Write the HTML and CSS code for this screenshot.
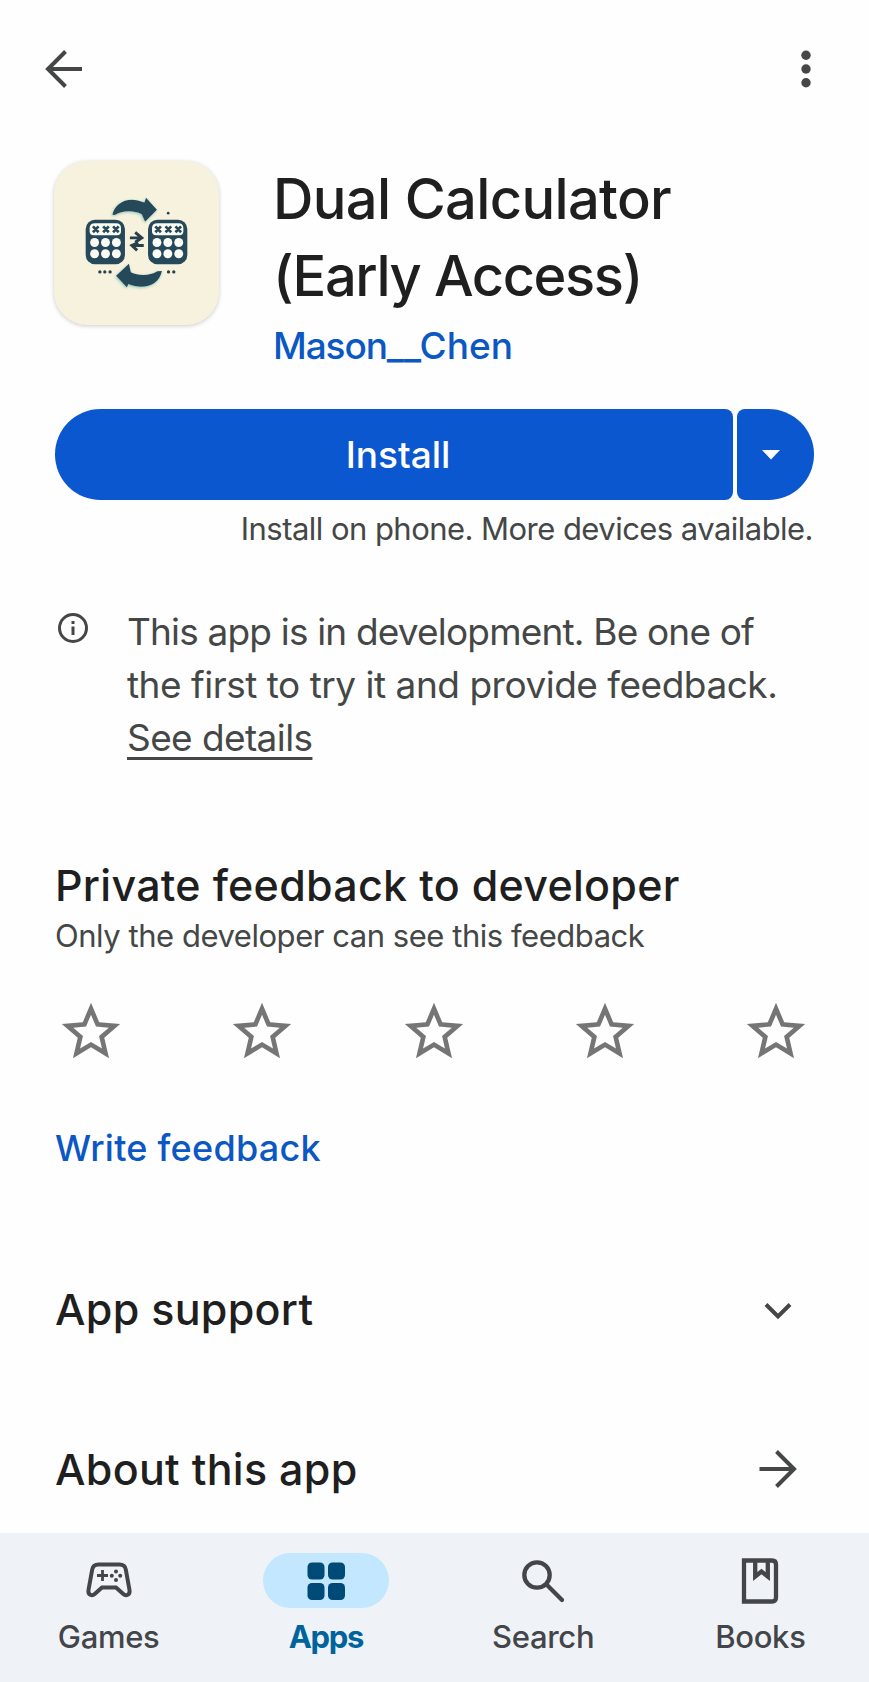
FILE: index.html
```html
<!DOCTYPE html>
<html lang="en">
<head>
<meta charset="utf-8">
<title>Dual Calculator</title>
<link rel="stylesheet" href="styles.css">
</head>
<body>
<div class="screen">
  <header class="topbar">
    <svg class="icon-arrow" viewBox="0 0 38 40"><path d="M37 20H3M20.500 2.500L3 20l17.500 17.500"/></svg>
    <svg class="icon-more" viewBox="0 0 10 38"><circle cx="5" cy="5.300" r="4.700"/><circle cx="5" cy="19" r="4.700"/><circle cx="5" cy="32.700" r="4.700"/></svg>
  </header>

  <main class="content">
    <section class="app">
      <svg class="app-icon" viewBox="38 32 500 493">
        <defs>
          <g id="calc">
            <rect width="119" height="135" rx="28" fill="#25485a"/>
            <path d="M28 11h64q15 0 15 15v9q0 12-12 12H24q-12 0-12-12v-9q0-15 16-15z" fill="#fbfbf0"/>
            <path d="M22 20l17 18m0-18L22 38M53 20l17 18m0-18L53 38M83 20l17 18m0-18L83 38" stroke="#25485a" stroke-width="8"/>
            <g fill="#fbfbf5"><circle cx="27" cy="69" r="13.500"/><circle cx="60" cy="69" r="13.500"/><circle cx="93" cy="69" r="13.500"/><circle cx="27" cy="103" r="13.500"/><circle cx="60" cy="103" r="13.500"/><circle cx="93" cy="103" r="13.500"/></g>
          </g>
          <filter id="glow" x="-20%" y="-20%" width="140%" height="140%"><feDropShadow dx="-2" dy="3" stdDeviation="5" flood-color="#8fc7bd"/></filter>
        </defs>
        <g filter="url(#glow)">
          <path d="M215 193C222 155 265 134 312 156L317 141L350 178L314 214L304 191C276 178 243 180 222 194Z" fill="#28495a"/>
          <path d="M365 363C357 405 312 422 263 403L259 413L226 378L265 341L271 367C296 379 328 378 351 364Z" fill="#28495a"/>
        </g>
        <use href="#calc" x="134" y="208"/>
        <use href="#calc" x="323" y="208"/>
        <path d="M268 263h34M284 246l20 17-20 13M310 286h-36M293 277l-19 9 16 15" fill="none" stroke="#28404a" stroke-width="9"/>
        <g fill="#28404a"><circle cx="384" cy="188" r="4"/><circle cx="177" cy="366" r="5"/><circle cx="192" cy="366" r="5"/><circle cx="208" cy="366" r="5"/><circle cx="385" cy="366" r="5"/><circle cx="401" cy="366" r="5"/></g>
      </svg>
      <div class="app-info">
        <h1 class="app-title"><span class="title-name">Dual Calculator</span><br><span class="title-note">(Early Access)</span></h1>
        <a class="app-author"><span class="author-first">Mason</span>__Chen</a>
      </div>
    </section>

    <div class="install">
      <button class="install-main">Install</button>
      <button class="install-more"><svg class="icon-caret" viewBox="0 0 18 10"><path d="M0 0h18L9 9.500z"/></svg></button>
    </div>
    <p class="install-note">Install on phone. More devices available.</p>

    <section class="notice">
      <svg class="icon-info" viewBox="0 0 32 32"><circle cx="16" cy="16" r="13.500"/><path d="M16 14.500v8.500M16 9v3"/></svg>
      <p class="notice-text"><span class="notice-lead">This app is in development. Be one of</span><br>the first to try it and provide feedback.<br><a class="notice-link">See details</a></p>
    </section>

    <section class="feedback">
      <h2 class="heading">Private feedback to developer</h2>
      <p class="feedback-sub">Only the developer can see this feedback</p>
      <div class="stars">
        <svg class="star" viewBox="0 0 24 24"><path d="M22 9.240l-7.190-.62L12 2 9.190 8.630 2 9.240l5.460 4.730L5.820 21 12 17.270 18.180 21l-1.630-7.030L22 9.240zM12 15.400l-3.760 2.270 1-4.280-3.320-2.880 4.380-.38L12 6.100l1.710 4.040 4.380.38-3.320 2.880 1 4.280L12 15.400z"/></svg>
        <svg class="star" viewBox="0 0 24 24"><path d="M22 9.240l-7.190-.62L12 2 9.190 8.630 2 9.240l5.460 4.730L5.820 21 12 17.270 18.180 21l-1.630-7.030L22 9.240zM12 15.400l-3.760 2.270 1-4.280-3.320-2.880 4.380-.38L12 6.100l1.710 4.040 4.380.38-3.320 2.880 1 4.280L12 15.400z"/></svg>
        <svg class="star" viewBox="0 0 24 24"><path d="M22 9.240l-7.190-.62L12 2 9.190 8.630 2 9.240l5.460 4.730L5.820 21 12 17.270 18.180 21l-1.630-7.030L22 9.240zM12 15.400l-3.760 2.270 1-4.280-3.320-2.880 4.380-.38L12 6.100l1.710 4.040 4.380.38-3.320 2.880 1 4.280L12 15.400z"/></svg>
        <svg class="star" viewBox="0 0 24 24"><path d="M22 9.240l-7.190-.62L12 2 9.190 8.630 2 9.240l5.460 4.730L5.820 21 12 17.270 18.180 21l-1.630-7.030L22 9.240zM12 15.400l-3.760 2.270 1-4.280-3.320-2.880 4.380-.38L12 6.100l1.710 4.040 4.380.38-3.320 2.880 1 4.280L12 15.400z"/></svg>
        <svg class="star" viewBox="0 0 24 24"><path d="M22 9.240l-7.190-.62L12 2 9.190 8.630 2 9.240l5.460 4.730L5.820 21 12 17.270 18.180 21l-1.630-7.030L22 9.240zM12 15.400l-3.760 2.270 1-4.280-3.320-2.880 4.380-.38L12 6.100l1.710 4.040 4.380.38-3.320 2.880 1 4.280L12 15.400z"/></svg>
      </div>
      <a class="write-link">Write feedback</a>
    </section>

    <section class="row row-support">
      <h2 class="heading">App support</h2>
      <svg class="icon-chevron" viewBox="0 0 28 18"><path d="M2 2.500l12 12 12-12"/></svg>
    </section>
    <section class="row row-about">
      <h2 class="heading">About this app</h2>
      <svg class="icon-arrow" viewBox="0 0 38 40"><path d="M.5 20H35M17.500 2.500L35 20 17.500 37.500"/></svg>
    </section>
  </main>

  <nav class="nav">
    <a class="nav-item">
      <span class="nav-icon"><svg class="nav-svg" viewBox="0 0 48 48"><path d="M13.500 7.500h21c3.800 0 5.800 2 6.300 5l3.700 20.500c.8 5-3.500 6.500-6.200 4L31 30.500H17L9.700 37c-2.700 2.500-7 1-6.200-4l3.700-20.500c.5-3 2.500-5 6.300-5z" fill="none" stroke="#434548" stroke-width="4"/><path d="M17.500 13v11M12 18.500h11" stroke="#434548" stroke-width="2.800"/><g fill="#434548"><circle cx="31" cy="14.500" r="2"/><circle cx="31" cy="23" r="2"/><circle cx="26.800" cy="18.700" r="2"/><circle cx="35.200" cy="18.700" r="2"/></g></svg></span>
      <span class="nav-label">Games</span>
    </a>
    <a class="nav-item nav-active">
      <span class="nav-icon"><svg class="nav-svg" viewBox="0 0 48 48"><g fill="#004a77"><rect x="5.500" y="5.500" width="17" height="17" rx="4.500"/><rect x="26" y="5.500" width="17" height="17" rx="4.500"/><rect x="5.500" y="26" width="17" height="17" rx="4.500"/><rect x="26" y="26" width="17" height="17" rx="4.500"/></g></svg></span>
      <span class="nav-label">Apps</span>
    </a>
    <a class="nav-item">
      <span class="nav-icon"><svg class="nav-svg" viewBox="0 0 48 48"><g fill="none" stroke="#434548" stroke-width="4.300" stroke-linecap="round"><circle cx="18" cy="18" r="12.700"/><path d="M27.500 27.500l15.500 15.500"/></g></svg></span>
      <span class="nav-label">Search</span>
    </a>
    <a class="nav-item">
      <span class="nav-icon"><svg class="nav-svg" viewBox="0 0 48 48"><path d="M8 3.500h28q4 0 4 4v33q0 4-4 4H8z" fill="none" stroke="#434548" stroke-width="4.300"/><path d="M19.200 3v16.500l6.300-5 6.300 5V3" fill="none" stroke="#434548" stroke-width="4.300"/></svg></span>
      <span class="nav-label">Books</span>
    </a>
  </nav>
</div>
</body>
</html>
```
FILE: styles.css
```css
* { box-sizing: border-box; }
body { margin: 0; background: #fefefe; font-family: Inter, Roboto, sans-serif; color: #1f1f1f; }
h1, h2, p { margin: 0; font-weight: 500; }
button { border: 0; padding: 0; font: inherit; color: inherit; }
svg { display: block; flex: none; }
.screen { display: flex; flex-direction: column; height: 1682px; overflow: hidden; }

.topbar { display: flex; justify-content: space-between; align-items: center; height: 139px; padding: 0 58px 1px 45px; flex: none; }
.icon-arrow { width: 38px; height: 40px; fill: none; stroke: #444746; stroke-width: 4; }
.icon-more { width: 10px; height: 38px; fill: #444746; }

.content { flex: 1; padding: 22px 54px 0 55px; }
.app { display: flex; gap: 54px; height: 248px; }
.app-icon { width: 165px; height: 164px; margin: 0 0 0 -1px; border-radius: 33px; background: #f6f2de; box-shadow: 0 1px 4px rgba(0, 0, 0, .2); }
.app-title { font-size: 56px; line-height: 77px; font-weight: 450; white-space: nowrap; }
.title-name { letter-spacing: -.65px; }
.title-note { letter-spacing: -1.4px; }
.app-author { display: block; margin-top: 9px; font-size: 37px; line-height: 44px; font-weight: 500; color: #0b57c4; }
.author-first { letter-spacing: -1.1px; }

.install { display: flex; gap: 4px; height: 91px; padding-right: 1px; color: #fff; }
.install-main { flex: 1; padding-left: 8px; border-radius: 46px 8px 8px 46px; background: #0b57d0; color: #fff; font-size: 37px; font-weight: 500; }
.install-more { width: 77px; display: flex; align-items: center; padding-left: 25px; border-radius: 8px 46px 46px 8px; background: #0b57d0; }
.icon-caret { width: 18px; height: 10px; fill: #fff; }
.install-note { margin: 9px 2px 0 0; font-size: 31px; line-height: 40px; font-weight: 400; text-align: right; color: #444746; white-space: nowrap; letter-spacing: -.54px; }

.notice { display: flex; margin-top: 56px; height: 254px; }
.icon-info { width: 32px; height: 32px; margin: 7px 38px 0 2px; fill: none; stroke: #444746; stroke-width: 3; }
.notice-text { font-size: 37px; line-height: 53px; font-weight: 400; color: #444746; white-space: nowrap; letter-spacing: -.48px; }
.notice-lead { letter-spacing: -.82px; }
.notice-link { letter-spacing: -.6px; text-decoration: underline; text-decoration-thickness: 3px; text-underline-offset: 6px; text-decoration-skip-ink: none; }

.heading { font-size: 43px; line-height: 52px; font-weight: 500; white-space: nowrap; letter-spacing: .28px; }
.feedback-sub { margin-top: 5px; font-size: 31px; line-height: 40px; font-weight: 400; color: #444746; letter-spacing: -.46px; }
.stars { display: flex; justify-content: space-between; margin: 41px 4px 0 1px; }
.star { width: 70px; height: 70px; fill: #757575; }
.write-link { display: block; margin-top: 59px; font-size: 36px; line-height: 44px; font-weight: 500; color: #0b57c4; letter-spacing: .27px; }

.row { display: flex; justify-content: space-between; align-items: center; }
.row-support { margin-top: 113px; padding-right: 23px; }
.row-about { margin-top: 108px; padding-right: 18px; }
.icon-chevron { width: 28px; height: 18px; margin-top: 3px; fill: none; stroke: #444746; stroke-width: 4; }

.nav { flex: none; display: grid; grid-template-columns: repeat(4, 1fr); height: 149px; padding-top: 20px; background: #eff3f8; color: #434548; }
.nav-item { display: flex; flex-direction: column; align-items: center; }
.nav-icon { display: flex; align-items: center; justify-content: center; width: 126px; height: 55px; border-radius: 28px; }
.nav-active .nav-icon { background: #c2e7ff; }
.nav-svg { width: 48px; height: 48px; }
.nav-label { margin-top: 9px; font-size: 31px; line-height: 40px; font-weight: 500; letter-spacing: -.3px; }
.nav-active .nav-label { color: #00639b; font-weight: 700; letter-spacing: -1.3px; }
```
